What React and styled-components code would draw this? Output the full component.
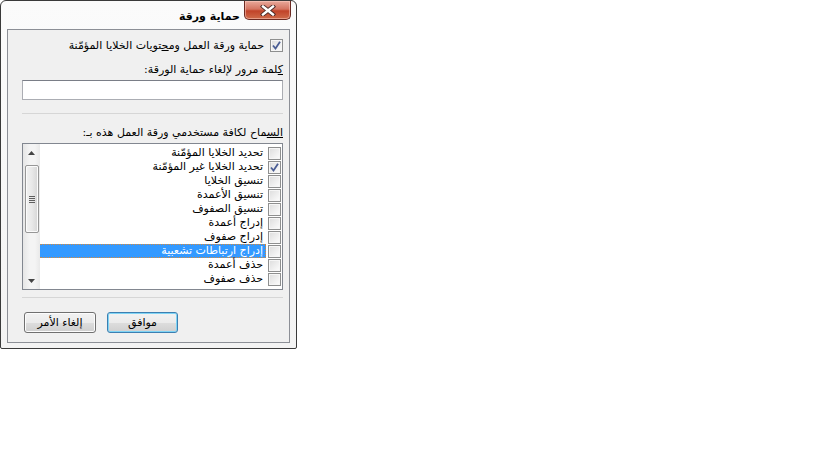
import React from "react";
import styled, { createGlobalStyle } from "styled-components";

const FONT = `"DejaVu Sans", Tahoma, sans-serif`;

const GlobalStyle = createGlobalStyle`
  html, body {
    margin: 0;
    padding: 0;
    background: #ffffff;
  }
  body {
    font-family: ${FONT};
    font-size: 11px;
    color: #000;
  }
`;

const Window = styled.div`
  box-sizing: border-box;
  width: 297px;
  height: 349px;
  border: 1px solid #3a3a3a;
  border-radius: 6px 6px 2px 2px;
  background: linear-gradient(to bottom, #fbfbfb, #f3f3f3);
  display: flex;
  flex-direction: column;
  padding: 0 6px 5px;
`;

const TitleBar = styled.div`
  height: 28px;
  flex: none;
  display: flex;
  justify-content: flex-end;
  align-items: flex-start;
`;

const Title = styled.span`
  font-weight: bold;
  font-size: 11px;
  line-height: 13px;
  margin-top: 9px;
  margin-right: 4px;
  direction: rtl;
`;

const CloseButton = styled.div`
  width: 47px;
  height: 19px;
  margin-right: -1px;
  box-sizing: border-box;
  border: 1px solid #6b2a22;
  border-top: none;
  border-radius: 0 0 5px 5px;
  background: linear-gradient(to bottom, #e9a99b 0%, #d47562 45%, #c14329 55%, #cf6b4a 100%);
  box-shadow: inset 0 0 0 1px rgba(255, 210, 200, 0.5);
  display: flex;
  align-items: center;
  justify-content: center;
`;

const Client = styled.div`
  flex: 1;
  box-sizing: border-box;
  border: 1px solid #8c8f96;
  background: #f0f0f0;
  direction: rtl;
  padding: 9px 6px 0 14px;
  display: flex;
  flex-direction: column;
`;

const CheckRow = styled.label`
  display: flex;
  align-items: center;
  gap: 6px;
  height: 13px;
  line-height: 13px;
`;

const Box = styled.span`
  box-sizing: border-box;
  flex: none;
  width: 13px;
  height: 13px;
  border: 1px solid #8e8f8f;
  background: linear-gradient(135deg, #dcdcdc, #fdfdfd);
  box-shadow: inset 0 0 0 1px #f6f6f6;
  display: flex;
  align-items: center;
  justify-content: center;
`;

const Caption = styled.div`
  margin-top: ${(p) => p.$top}px;
  height: 13px;
  line-height: 13px;
`;

const Key = styled.span`
  text-decoration: underline;
`;

const TextInput = styled.input`
  box-sizing: border-box;
  display: block;
  width: 100%;
  height: 20px;
  margin: 4px 0 0;
  border: 1px solid #abadb3;
  border-top-color: #7a7e87;
  background: #fff;
  outline: none;
`;

const Separator = styled.div`
  height: 1px;
  background: #d6d6d6;
  margin-top: ${(p) => p.$top}px;
`;

const ListBox = styled.div`
  box-sizing: border-box;
  height: 147px;
  margin-top: 4px;
  border: 1px solid #828790;
  background: #fff;
  display: flex;
`;

const Items = styled.div`
  flex: 1;
  padding-top: 2px;
  overflow: hidden;
`;

const ItemRow = styled.div`
  display: flex;
  align-items: center;
  height: 14px;
  padding-right: 1px;
`;

const ItemText = styled.div`
  flex: 1;
  box-sizing: border-box;
  height: 14px;
  line-height: 12px;
  margin-right: 2px;
  padding-right: 2px;
  border: 1px dotted ${(p) => (p.$selected ? "#d98a3a" : "transparent")};
  border-left-color: transparent;
  background: ${(p) => (p.$selected ? "#3399ff" : "transparent")};
  color: ${(p) => (p.$selected ? "#fff" : "#000")};
  white-space: nowrap;
`;

const ScrollBar = styled.div`
  width: 17px;
  flex: none;
  display: flex;
  flex-direction: column;
  background: linear-gradient(to right, #e6e6e6, #f4f4f4 40%, #f4f4f4 70%, #e9e9e9);
`;

const ArrowButton = styled.div`
  height: 17px;
  display: flex;
  align-items: center;
  justify-content: center;
`;

const Track = styled.div`
  flex: 1;
  padding: 4px 1px 0 2px;
`;

const Thumb = styled.div`
  box-sizing: border-box;
  height: 68px;
  border: 1px solid #979797;
  border-radius: 2px;
  background: linear-gradient(to right, #f2f2f2, #e8e8e8 50%, #d6d6d6);
  box-shadow: inset 0 0 0 1px #fbfbfb;
  display: flex;
  flex-direction: column;
  align-items: center;
  justify-content: center;
  gap: 1px;
`;

const Grip = styled.span`
  width: 6px;
  height: 1px;
  background: #5e5e5e;
`;

const Buttons = styled.div`
  display: flex;
  justify-content: flex-end;
  gap: 11px;
  margin-top: 14px;
  padding-left: 2px;
`;

const Button = styled.button`
  box-sizing: border-box;
  width: ${(p) => p.$w}px;
  height: 21px;
  padding: 0;
  font-family: ${FONT};
  font-size: 11px;
  color: #000;
  border: 1px solid ${(p) => (p.$default ? "#3c7fb1" : "#707070")};
  border-radius: 3px;
  background: linear-gradient(to bottom, #f2f2f2 0%, #ebebeb 50%, #dddddd 51%, #cfcfcf 100%);
  box-shadow: inset 0 0 0 1px ${(p) => (p.$default ? "#7fd4f5" : "#fcfcfc")};
`;

const Check = () => (
  <svg width="9" height="9" viewBox="0 0 9 9">
    <path d="M1 4.5 L3.5 7.5 L8 0.8" fill="none" stroke="#4a5d94" strokeWidth="1.8" />
  </svg>
);

const CloseGlyph = () => (
  <svg width="16" height="11" viewBox="0 0 16 11">
    <path d="M3 1.5 L13 9.5 M13 1.5 L3 9.5" stroke="#4a2a26" strokeWidth="4.2" strokeLinecap="square" />
    <path d="M3 1.5 L13 9.5 M13 1.5 L3 9.5" stroke="#ffffff" strokeWidth="2.4" strokeLinecap="square" />
  </svg>
);

const Arrow = ({ up }) => (
  <svg width="7" height="4" viewBox="0 0 7 4">
    <path d={up ? "M0 4 L3.5 0 L7 4 Z" : "M0 0 L7 0 L3.5 4 Z"} fill="#444" />
  </svg>
);

const items = [
  { label: "تحديد الخلايا المؤمّنة", checked: false },
  { label: "تحديد الخلايا غير المؤمّنة", checked: true },
  { label: "تنسيق الخلايا", checked: false },
  { label: "تنسيق الأعمدة", checked: false },
  { label: "تنسيق الصفوف", checked: false },
  { label: "إدراج أعمدة", checked: false },
  { label: "إدراج صفوف", checked: false },
  { label: "إدراج ارتباطات تشعبية", checked: false, selected: true },
  { label: "حذف أعمدة", checked: false },
  { label: "حذف صفوف", checked: false },
];

export default function App() {
  return (
    <>
      <GlobalStyle />
      <Window>
        <TitleBar>
          <Title>حماية ورقة</Title>
          <CloseButton>
            <CloseGlyph />
          </CloseButton>
        </TitleBar>
        <Client>
          <CheckRow>
            <Box>
              <Check />
            </Box>
            <span>
              حماية ورقة العمل وم<Key>ح</Key>تويات الخلايا المؤمّنة
            </span>
          </CheckRow>
          <Caption $top={11}>
            <Key>ك</Key>لمة مرور لإلغاء حماية الورقة:
          </Caption>
          <TextInput type="password" />
          <Separator $top={13} />
          <Caption $top={12}>
            <Key>الس</Key>ماح لكافة مستخدمي ورقة العمل هذه بـ:
          </Caption>
          <ListBox>
            <Items>
              {items.map((item) => (
                <ItemRow key={item.label}>
                  <Box>{item.checked && <Check />}</Box>
                  <ItemText $selected={item.selected}>{item.label}</ItemText>
                </ItemRow>
              ))}
            </Items>
            <ScrollBar>
              <ArrowButton>
                <Arrow up />
              </ArrowButton>
              <Track>
                <Thumb>
                  <Grip />
                  <Grip />
                  <Grip />
                  <Grip />
                </Thumb>
              </Track>
              <ArrowButton>
                <Arrow />
              </ArrowButton>
            </ScrollBar>
          </ListBox>
          <Separator $top={7} />
          <Buttons>
            <Button $w={71} $default>
              موافق
            </Button>
            <Button $w={72}>إلغاء الأمر</Button>
          </Buttons>
        </Client>
      </Window>
    </>
  );
}
